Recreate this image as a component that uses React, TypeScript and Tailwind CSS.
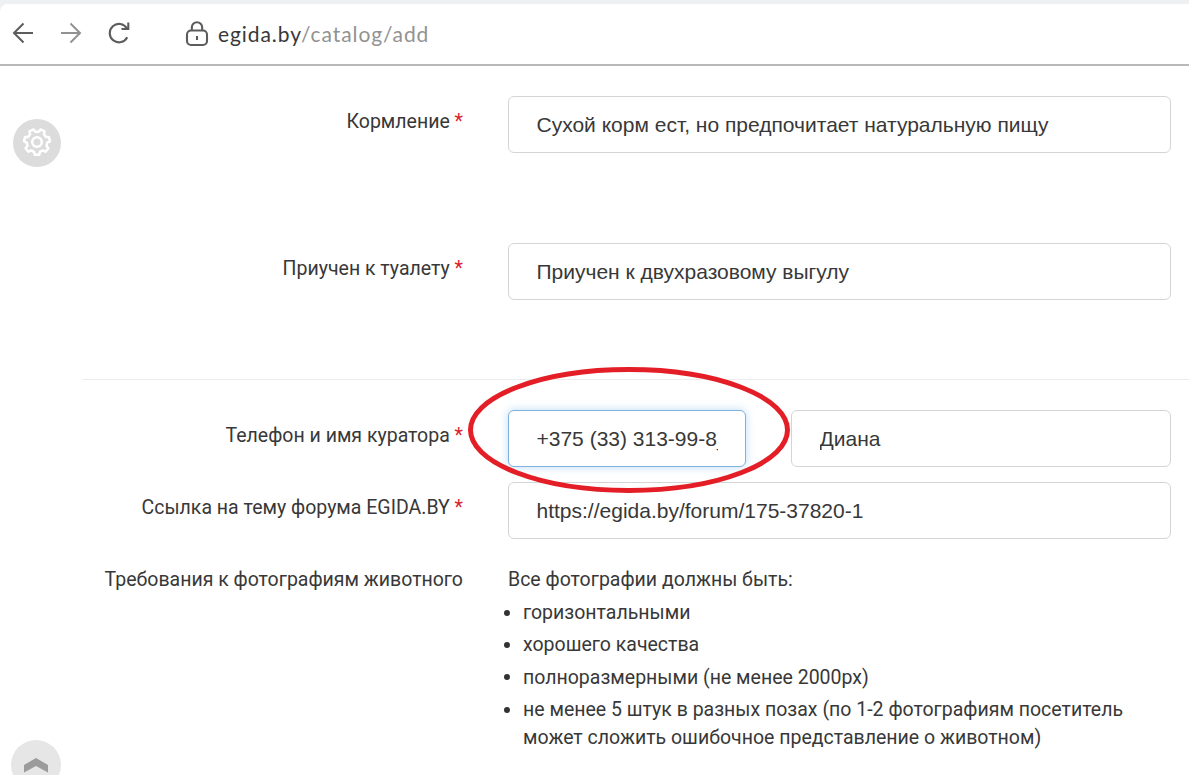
import React from 'react';

interface FieldProps {
  value: string;
  className?: string;
  focused?: boolean;
}

const Field: React.FC<FieldProps> = ({ value, className = '', focused }) => (
  <input
    defaultValue={value}
    className={`h-[57px] min-w-0 rounded-md border bg-white pl-[27.5px] pr-[27px] font-['Liberation_Sans',sans-serif] text-[21px] text-[#383838] outline-none ${
      focused ? 'border-[#7fb2dc] shadow-[0_0_8px_rgba(102,175,233,0.45)]' : 'border-[#d5d5d5]'
    } ${className}`}
  />
);

interface RowProps {
  label: string;
  required?: boolean;
  className?: string;
  children: React.ReactNode;
}

const Row: React.FC<RowProps> = ({ label, required, className = '', children }) => (
  <div className={`flex items-start gap-[45px] ${className}`}>
    <div className="w-[463px] shrink-0 whitespace-nowrap pt-3 text-right leading-7">
      {label}
      {required && <span className="text-[#d9232b]"> *</span>}
    </div>
    {children}
  </div>
);

const requirements = [
  'горизонтальными',
  'хорошего качества',
  'полноразмерными (не менее 2000px)',
];

// seven teeth, one of them pointing straight down
const gearPoints = Array.from({ length: 7 }, (_, i) => {
  const mid = 90 + (i * 360) / 7;
  return [[-16, 10.3], [-10, 13], [10, 13], [16, 10.3]]
    .map(([offset, r]) => {
      const a = ((mid + offset) * Math.PI) / 180;
      return `${(15 + r * Math.cos(a)).toFixed(2)},${(15 + r * Math.sin(a)).toFixed(2)}`;
    })
    .join(' ');
}).join(' ');

const App: React.FC = () => {
  return (
    <div className="relative h-[775px] w-[1189px] overflow-hidden bg-white font-['Roboto',sans-serif] text-[19.5px] text-[#383838]">
      {/* BROWSER BAR */}
      <div className="h-[66px] border-b-2 border-[#b9b9b9] bg-[#eff0f2] pt-1">
        <div className="flex h-[60px] items-center rounded-tl-lg bg-white pl-3 text-[#5c5c5c]">
          <svg width="22" height="22" viewBox="0 0 22 22" className="mb-[3px]" fill="none" stroke="currentColor" strokeWidth="2">
            <path d="M21 11H2M11.5 1.5L2 11l9.5 9.5" />
          </svg>
          <svg width="22" height="22" viewBox="0 0 22 22" className="mb-[3px] ml-[26px] text-[#929292]" fill="none" stroke="currentColor" strokeWidth="2">
            <path d="M1 11h19M10.5 1.5L20 11l-9.5 9.5" />
          </svg>
          <svg width="24" height="24" viewBox="0 0 24 24" className="mb-[3px] ml-[25px]" fill="none" stroke="currentColor" strokeWidth="2.1">
            <path d="M20.2 16.2A9.2 9.2 0 1 1 19.9 7.5M21.3 1.5V8H14.5" />
          </svg>
          <svg width="24" height="26" viewBox="0 0 24 26" className="ml-[54px]" fill="none" stroke="currentColor" strokeWidth="2.1">
            <rect x="2" y="9.5" width="20" height="14.5" rx="4" />
            <path d="M6.8 9.5V6.5a5.2 5.2 0 0 1 10.4 0v3M12 15v4" />
          </svg>
          <span className="ml-[9px] whitespace-nowrap font-['Lato',sans-serif] text-[21px] tracking-[0.92px] text-[#383838]">
            egida.by<span className="text-[#929292]">/catalog/add</span>
          </span>
        </div>
      </div>

      {/* FORM */}
      <Row label="Кормление" required className="mt-[30px]">
        <Field value="Сухой корм ест, но предпочитает натуральную пищу" className="w-[663px]" />
      </Row>
      <Row label="Приучен к туалету" required className="mt-[90px]">
        <Field value="Приучен к двухразовому выгулу" className="w-[663px]" />
      </Row>

      <hr className="ml-[82px] mt-[79px] border-[#ececec]" />

      <Row label="Телефон и имя куратора" required className="mt-[30px]">
        <div className="flex gap-[45px]">
          <Field value="+375 (33) 313-99-8_" focused className="w-[238px]" />
          <Field value="Диана" className="w-[380px]" />
        </div>
      </Row>
      <Row label="Ссылка на тему форума EGIDA.BY" required className="mt-[15px]">
        <Field value="https://egida.by/forum/175-37820-1" className="w-[663px]" />
      </Row>
      <Row label="Требования к фотографиям животного" className="mt-[15px]">
        <div className="pt-3 leading-7">
          <p>Все фотографии должны быть:</p>
          <ul className="mt-[5px] space-y-[4.4px] pl-[15px]">
            {requirements.map(item => (
              <li key={item} className="flex items-center">
                <span className="-ml-[19px] mr-[13px] -mt-px size-1.5 rounded-full bg-[#333]" />
                {item}
              </li>
            ))}
            <li className="flex items-start">
              <span className="-ml-[19px] mr-[13px] mt-[11px] size-1.5 rounded-full bg-[#333]" />
              <span className="whitespace-nowrap">
                не менее 5 штук в разных позах (по 1-2 фотографиям посетитель
                <br />
                может сложить ошибочное представление о животном)
              </span>
            </li>
          </ul>
        </div>
      </Row>

      {/* FLOATING BUTTONS */}
      <button className="absolute left-[13px] top-[119px] flex size-12 items-center justify-center rounded-full bg-[#dcdcdc] text-white">
        <svg width="30" height="30" viewBox="0 0 30 30" className="-mt-0.5" fill="none" stroke="currentColor" strokeWidth="2.5" strokeLinejoin="round">
          <polygon points={gearPoints} />
          <circle cx="15" cy="15" r="4.8" />
        </svg>
      </button>
      <button className="absolute left-[11px] top-[740px] flex size-[50px] justify-center rounded-full bg-[#e6e6e6] pt-[18px]">
        <svg width="24" height="15" viewBox="0 0 24 15" fill="#9b9b9b">
          <path d="M0 7L12 0l12 7v7.5L12 8 0 14.5z" />
        </svg>
      </button>

      {/* HIGHLIGHT */}
      <svg width="324" height="128" viewBox="0 0 324 128" className="pointer-events-none absolute left-[467px] top-[366px]" fill="none" stroke="#e41e26" strokeWidth="5">
        <ellipse cx="162" cy="64" rx="158.5" ry="60.5" />
      </svg>
    </div>
  );
};

export default App;
